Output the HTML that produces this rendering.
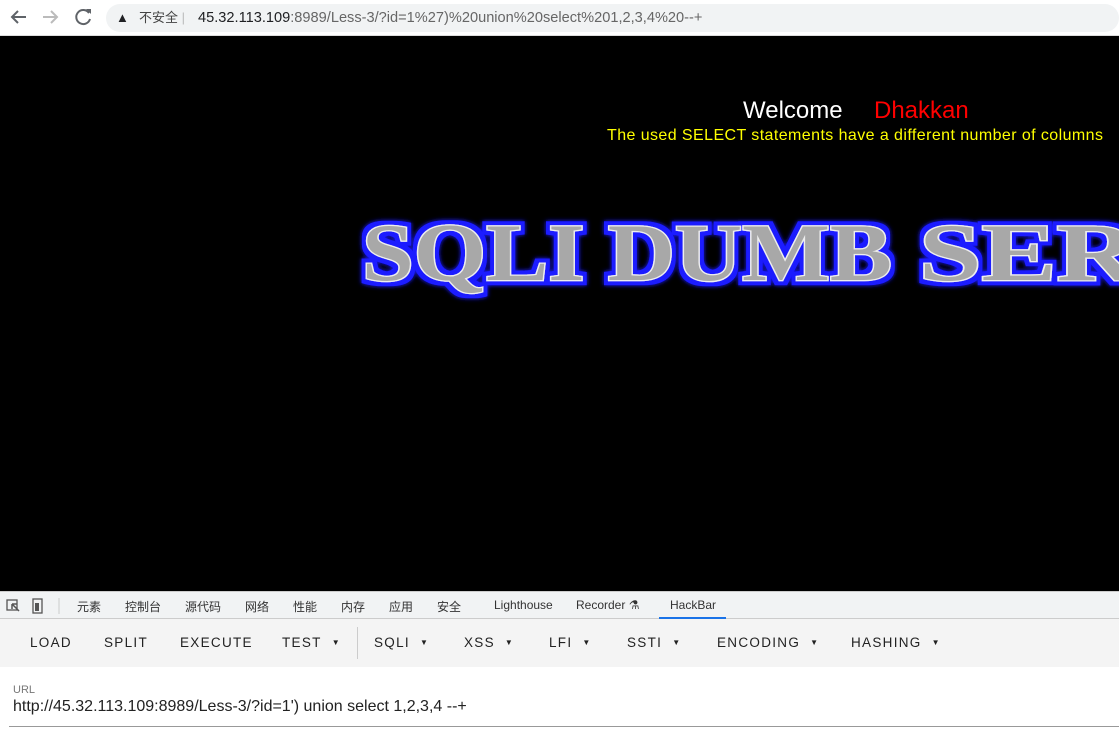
<!DOCTYPE html>
<html><head><meta charset="utf-8"><style>
*{margin:0;padding:0;box-sizing:border-box}
body{width:1119px;height:736px;overflow:hidden;background:#000;font-family:"Liberation Sans","Noto Sans CJK SC",sans-serif;position:relative}
.top{position:absolute;left:0;top:0;width:1119px;height:36px;background:#fff;border-bottom:1px solid #ddd}
.omni{position:absolute;left:106px;top:4px;width:1013px;height:28px;background:#f1f3f4;border-radius:14px;font-size:14.6px;line-height:28px;color:#202124}
.page{position:absolute;left:0;top:36px;width:1119px;height:555px;background:#000;overflow:hidden}
.dev{position:absolute;left:0;top:591px;width:1119px;height:145px;background:#fff}
.tabs{height:28px;background:#f1f3f4;border-bottom:1px solid #ccc;border-top:1px solid #ccc;font-size:12px;color:#333;position:relative}
.tabs span{position:absolute;top:6px}
.bar{height:48px;background:#f4f4f4;position:relative;font-size:13.5px;letter-spacing:1.3px;color:#222;font-weight:500}
.bar>span{position:absolute;top:16px;white-space:nowrap}
.ar{font-size:8px;margin-left:10px;vertical-align:2px}
</style></head><body>
<div class="top">
<svg width="100" height="36" style="position:absolute;left:0;top:0">
<path d="M26 17H12M18 11l-6 6 6 6" stroke="#5f6368" stroke-width="2" fill="none"/>
<path d="M43 17h14M51 11l6 6-6 6" stroke="#bbb" stroke-width="2" fill="none"/>
<path d="M89 13a7 7 0 1 0 1 6" stroke="#5f6368" stroke-width="2" fill="none"/><path d="M86 9h5v5z" fill="#5f6368"/>
</svg>
<div class="omni"><span style="position:absolute;left:10px;top:0;font-size:13px">▲</span><span style="position:absolute;left:33px;font-size:13px;color:#444">不安全 <span style="color:#bbb">|</span></span><span style="position:absolute;left:92px">45.32.113.109<span style="color:#666">:8989/Less-3/?id=1%27)%20union%20select%201,2,3,4%20--+</span></span></div>
</div>
<div class="page">
<div style="position:absolute;left:743px;top:61px;font-size:24px;color:#fff">Welcome</div>
<div style="position:absolute;left:874px;top:61px;font-size:24px;color:#f00">Dhakkan</div>
<div style="position:absolute;left:607px;top:91px;font-size:16px;letter-spacing:0.42px;color:#ff0;white-space:nowrap">The used SELECT statements have a different number of columns</div>
<svg width="1119" height="555" style="position:absolute;left:0;top:0">
<defs><filter id="g" x="-10%" y="-30%" width="120%" height="160%"><feMorphology operator="dilate" radius="4" in="SourceAlpha" result="d"/><feFlood flood-color="#1a1aff"/><feComposite in2="d" operator="in" result="b"/><feGaussianBlur in="b" stdDeviation="2.5" result="bb"/><feMerge><feMergeNode in="bb"/><feMergeNode in="b"/><feMergeNode in="SourceGraphic"/></feMerge></filter></defs>
<g filter="url(#g)" font-family="Liberation Serif,serif" font-weight="bold" font-size="82" fill="#a8a8a8" stroke="#eee" stroke-width="2.5" paint-order="stroke">
<text x="362" y="244" textLength="530" lengthAdjust="spacingAndGlyphs">SQLI DUMB</text>
<text x="919" y="244" textLength="400" lengthAdjust="spacingAndGlyphs">SERIES</text>
</g></svg>
</div>
<div class="dev">
<div class="tabs">
<svg width="60" height="28" style="position:absolute;left:0;top:0"><rect x="7" y="8" width="10" height="10" fill="none" stroke="#555" stroke-width="1.3"/><path d="M12 12l7 7M12 12v5M12 12h5" stroke="#555" stroke-width="1.5"/><rect x="33" y="7" width="9" height="14" fill="none" stroke="#555" stroke-width="1.3"/><rect x="35" y="11" width="4" height="8" fill="#555"/><path d="M59 6v16" stroke="#ccc"/></svg>
<span style="left:77px">元素</span><span style="left:125px">控制台</span><span style="left:185px">源代码</span><span style="left:245px">网络</span><span style="left:293px">性能</span><span style="left:341px">内存</span><span style="left:389px">应用</span><span style="left:437px">安全</span><span style="left:494px">Lighthouse</span><span style="left:576px">Recorder ⚗</span><span style="left:670px">HackBar</span>
<div style="position:absolute;left:659px;top:25px;width:67px;height:2px;background:#1a73e8"></div>
</div>
<div class="bar">
<span style="left:30px">LOAD</span><span style="left:104px">SPLIT</span><span style="left:180px">EXECUTE</span><span style="left:282px">TEST<span class="ar">▼</span></span>
<div style="position:absolute;left:357px;top:8px;width:1px;height:32px;background:#ccc"></div>
<span style="left:374px">SQLI<span class="ar">▼</span></span><span style="left:464px">XSS<span class="ar">▼</span></span><span style="left:549px">LFI<span class="ar">▼</span></span><span style="left:627px">SSTI<span class="ar">▼</span></span><span style="left:717px">ENCODING<span class="ar">▼</span></span><span style="left:851px">HASHING<span class="ar">▼</span></span>
</div>
<div style="position:absolute;left:13px;top:93px;font-size:11px;color:#777">URL</div>
<div style="position:absolute;left:13px;top:107px;font-size:16px;color:#222">http://45.32.113.109:8989/Less-3/?id=1') union select 1,2,3,4 --+</div>
<div style="position:absolute;left:9px;top:135px;width:1110px;height:1px;background:#999"></div>
</div>
</body></html>
